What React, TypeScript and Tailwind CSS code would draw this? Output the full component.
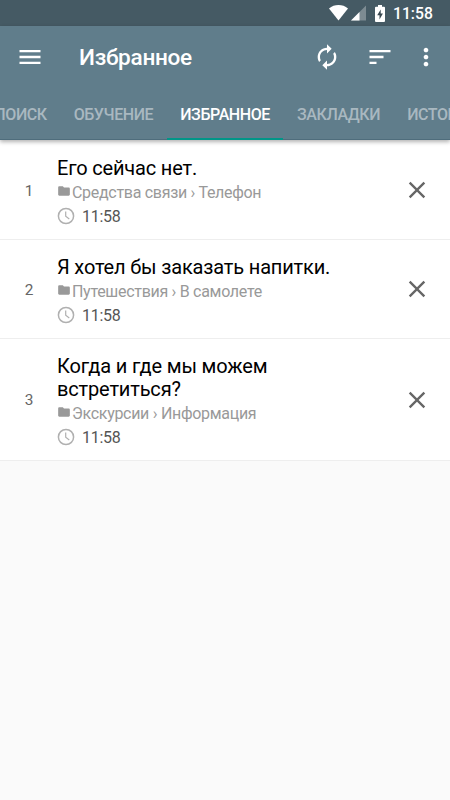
import React from "react";
import { MdAutorenew, MdClose, MdFolder, MdMenu, MdMoreVert, MdSort } from "react-icons/md";

const tabs = ["ПОИСК", "ОБУЧЕНИЕ", "ИЗБРАННОЕ", "ЗАКЛАДКИ", "ИСТОРИЯ"];

const favorites = [
  { id: 1, text: "Его сейчас нет.", path: "Средства связи › Телефон", time: "11:58" },
  { id: 2, text: "Я хотел бы заказать напитки.", path: "Путешествия › В самолете", time: "11:58" },
  { id: 3, text: "Когда и где мы можем встретиться?", path: "Экскурсии › Информация", time: "11:58" },
];

const StatusBar = () => (
  <div className="flex h-[26px] items-center justify-end bg-[#455a64] pr-[18px] text-white">
    <svg className="h-4 w-[19px]" viewBox="0 0 19 16" fill="currentColor">
      <path d="M0 3.4C2.7 1.2 6 0 9.5 0S16.3 1.2 19 3.4L9.5 15.5Z" />
    </svg>
    <svg className="ml-[3px] h-4 w-[15px]" viewBox="0 0 15 16" fill="currentColor">
      <path d="M0 15.5 15 .5v15Z" opacity=".3" />
      <path d="M0 15.5 8.5 7v8.5Z" />
    </svg>
    <svg className="ml-[9px] h-[17px] w-[10px]" viewBox="0 0 10 17">
      <path d="M3 0h4v1.8h2a1 1 0 0 1 1 1V16a1 1 0 0 1-1 1H1a1 1 0 0 1-1-1V2.8a1 1 0 0 1 1-1h2Z" fill="#fff" />
      <path d="M5.7 4.5 2.2 10.2h2.3v4.3l3.4-5.9H5.7Z" fill="#37474f" />
    </svg>
    <span className="ml-2 w-[39px] pt-[2px] text-[15.7px] font-medium leading-none">11:58</span>
  </div>
);

const Header = () => (
  <header className="relative bg-[#607d8b] text-white shadow-[inset_0_-1px_0_#4f6d7c,0_2px_4px_rgba(0,0,0,0.3)]">
    <div className="flex h-[62px] items-center pl-4">
      <MdMenu className="size-7" />
      <h1 className="ml-[35px] flex-1 pt-[2px] text-[22.6px] font-medium leading-none tracking-[-0.3px]">Избранное</h1>
      <MdAutorenew className="size-7" />
      <MdSort className="ml-[25px] size-7" />
      <MdMoreVert className="-mr-0.5 ml-[18px] size-7" />
      <span className="w-3" />
    </div>
    <nav className="flex h-[52px] overflow-hidden whitespace-nowrap">
      <div className="-ml-[19.2px] flex">
        {tabs.map((tab) => (
          <div
            key={tab}
            className={
              tab === "ИЗБРАННОЕ"
                ? "flex shrink-0 items-center border-b-2 border-[#009688] px-[13.5px] pt-[4px] text-[16px] font-medium tracking-[-0.41px]"
                : "flex shrink-0 items-center border-b-2 border-transparent px-[13.5px] pt-[4px] text-[16px] font-medium tracking-[-0.41px] text-[#a9b8c0]"
            }
          >
            {tab}
          </div>
        ))}
      </div>
    </nav>
  </header>
);

const ClockIcon = () => (
  <svg className="mb-px size-[18px]" viewBox="0 0 18 18" fill="none" stroke="#b0b0b0" strokeWidth="1.5">
    <circle cx="9" cy="9" r="7.6" />
    <path d="M8.7 4.5v4.8l3.6 2.6" strokeWidth="1.2" />
  </svg>
);

const App = () => {
  return (
    <div className="min-h-screen w-[450px] overflow-hidden bg-[#fafafa] font-['Roboto',sans-serif]">
      <StatusBar />
      <Header />
      <ul className="bg-white pt-px">
        {favorites.map((item) => (
          <li key={item.id} className="flex items-center border-b border-[#eeeeee]">
            <span className="mt-[3px] w-[57px] pl-px text-center text-[15.4px] leading-none text-[#666]">{item.id}</span>
            <div className="w-[310px] pb-[11px] pt-4">
              <p className="w-[290px] text-[20px] leading-[23px] tracking-[-0.17px] text-black">{item.text}</p>
              <p className="mt-px flex h-6 items-center text-[16px] tracking-[-0.3px] text-[#999]">
                <MdFolder className="mb-1 mr-px size-[14px]" />
                {item.path}
              </p>
              <p className="flex h-[23px] items-center text-[16px] tracking-[-0.3px] text-[#555]">
                <ClockIcon />
                <span className="ml-[7px] pt-px">{item.time}</span>
              </p>
            </div>
            <MdClose className="ml-9 size-7 text-[#666]" />
          </li>
        ))}
      </ul>
    </div>
  );
};

export default App;
